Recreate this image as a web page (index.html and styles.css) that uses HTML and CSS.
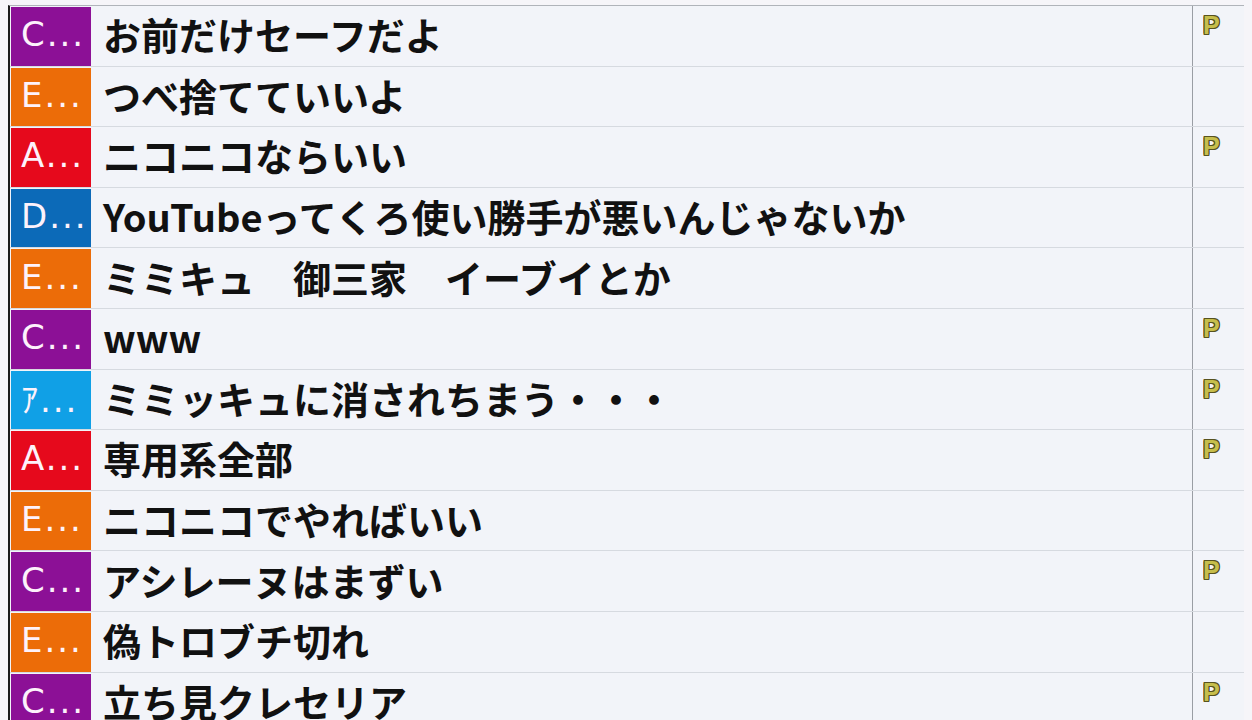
FILE: index.html
```html
<!DOCTYPE html>
<html lang="ja">
<head>
  <meta charset="UTF-8">
  <meta name="viewport" content="width=device-width, initial-scale=1.0">
  <title>コメント</title>
  <link rel="stylesheet" href="styles.css">
</head>
<body>
  <!-- コメント一覧 -->
  <div class="comments">
    <div class="row">
      <div class="user purple">C...</div>
      <div class="text">お前だけセーフだよ</div>
      <div class="mark"><span class="premium">P</span></div>
    </div>
    <div class="row">
      <div class="user orange">E...</div>
      <div class="text">つべ捨てていいよ</div>
      <div class="mark"></div>
    </div>
    <div class="row">
      <div class="user red">A...</div>
      <div class="text">ニコニコならいい</div>
      <div class="mark"><span class="premium">P</span></div>
    </div>
    <div class="row">
      <div class="user blue">D...</div>
      <div class="text">YouTubeってくろ使い勝手が悪いんじゃないか</div>
      <div class="mark"></div>
    </div>
    <div class="row">
      <div class="user orange">E...</div>
      <div class="text">ミミキュ　御三家　イーブイとか</div>
      <div class="mark"></div>
    </div>
    <div class="row">
      <div class="user purple">C...</div>
      <div class="text">www</div>
      <div class="mark"><span class="premium">P</span></div>
    </div>
    <div class="row">
      <div class="user sky">ｱ...</div>
      <div class="text">ミミッキュに消されちまう・・・</div>
      <div class="mark"><span class="premium">P</span></div>
    </div>
    <div class="row">
      <div class="user red">A...</div>
      <div class="text">専用系全部</div>
      <div class="mark"><span class="premium">P</span></div>
    </div>
    <div class="row">
      <div class="user orange">E...</div>
      <div class="text">ニコニコでやればいい</div>
      <div class="mark"></div>
    </div>
    <div class="row">
      <div class="user purple">C...</div>
      <div class="text">アシレーヌはまずい</div>
      <div class="mark"><span class="premium">P</span></div>
    </div>
    <div class="row">
      <div class="user orange">E...</div>
      <div class="text">偽トロブチ切れ</div>
      <div class="mark"></div>
    </div>
    <div class="row">
      <div class="user purple">C...</div>
      <div class="text">立ち見クレセリア</div>
      <div class="mark"><span class="premium">P</span></div>
    </div>
  </div>
</body>
</html>
```

FILE: styles.css
```css
* {
  margin: 0;
  padding: 0;
  box-sizing: border-box;
}
html, body {
  width: 100%;
  height: 100%;
  overflow: hidden;
}
body {
  background-color: #f6f5f9;
  font-family: "Noto Sans CJK JP", sans-serif;
}
.comments {
  width: 1236px;
  margin: 5px 0 0 8px;
  border-top: 1px solid #b0b4ba;
  border-left: 2px solid #1c1c1c;
  background-color: #f2f4f9;
}
.row {
  display: grid;
  grid-template-columns: 80px 1fr 52px;
  height: 60.6px;
  padding-left: 1px;
  border-bottom: 1px solid #d6dae0;
}
.user {
  margin-top: 1px;
  padding: 0 0 4px 10px;
  display: flex;
  align-items: center;
  color: #fdf2fb;
  font-family: "DejaVu Sans", "Noto Sans CJK JP", sans-serif;
  font-size: 34px;
  letter-spacing: 2px;
  overflow: hidden;
  white-space: nowrap;
}
.purple { background-color: #8c1096; }
.orange { background-color: #ec6c08; }
.red { background-color: #e6091c; }
.blue { background-color: #0c6ab8; }
.sky { background-color: #10a0e6; }

.text {
  padding: 0 0 4px 12px;
  display: flex;
  align-items: center;
  color: #111;
  font-size: 38px;
  font-weight: 700;
  white-space: nowrap;
  overflow: hidden;
}
.mark {
  border-left: 1px solid #9a9ea4;
  padding: 7px 0 0 10px;
}
.premium {
  display: inline-block;
  font-family: "Liberation Sans", sans-serif;
  font-weight: 700;
  font-size: 25px;
  line-height: 1;
  color: #c6be4c;
  text-shadow:
    1px 0 0 #57521f, -1px 0 0 #57521f,
    0 1px 0 #57521f, 0 -1px 0 #57521f,
    1px 1px 0 #57521f, -1px -1px 0 #57521f,
    1px -1px 0 #57521f, -1px 1px 0 #57521f;
}
```
